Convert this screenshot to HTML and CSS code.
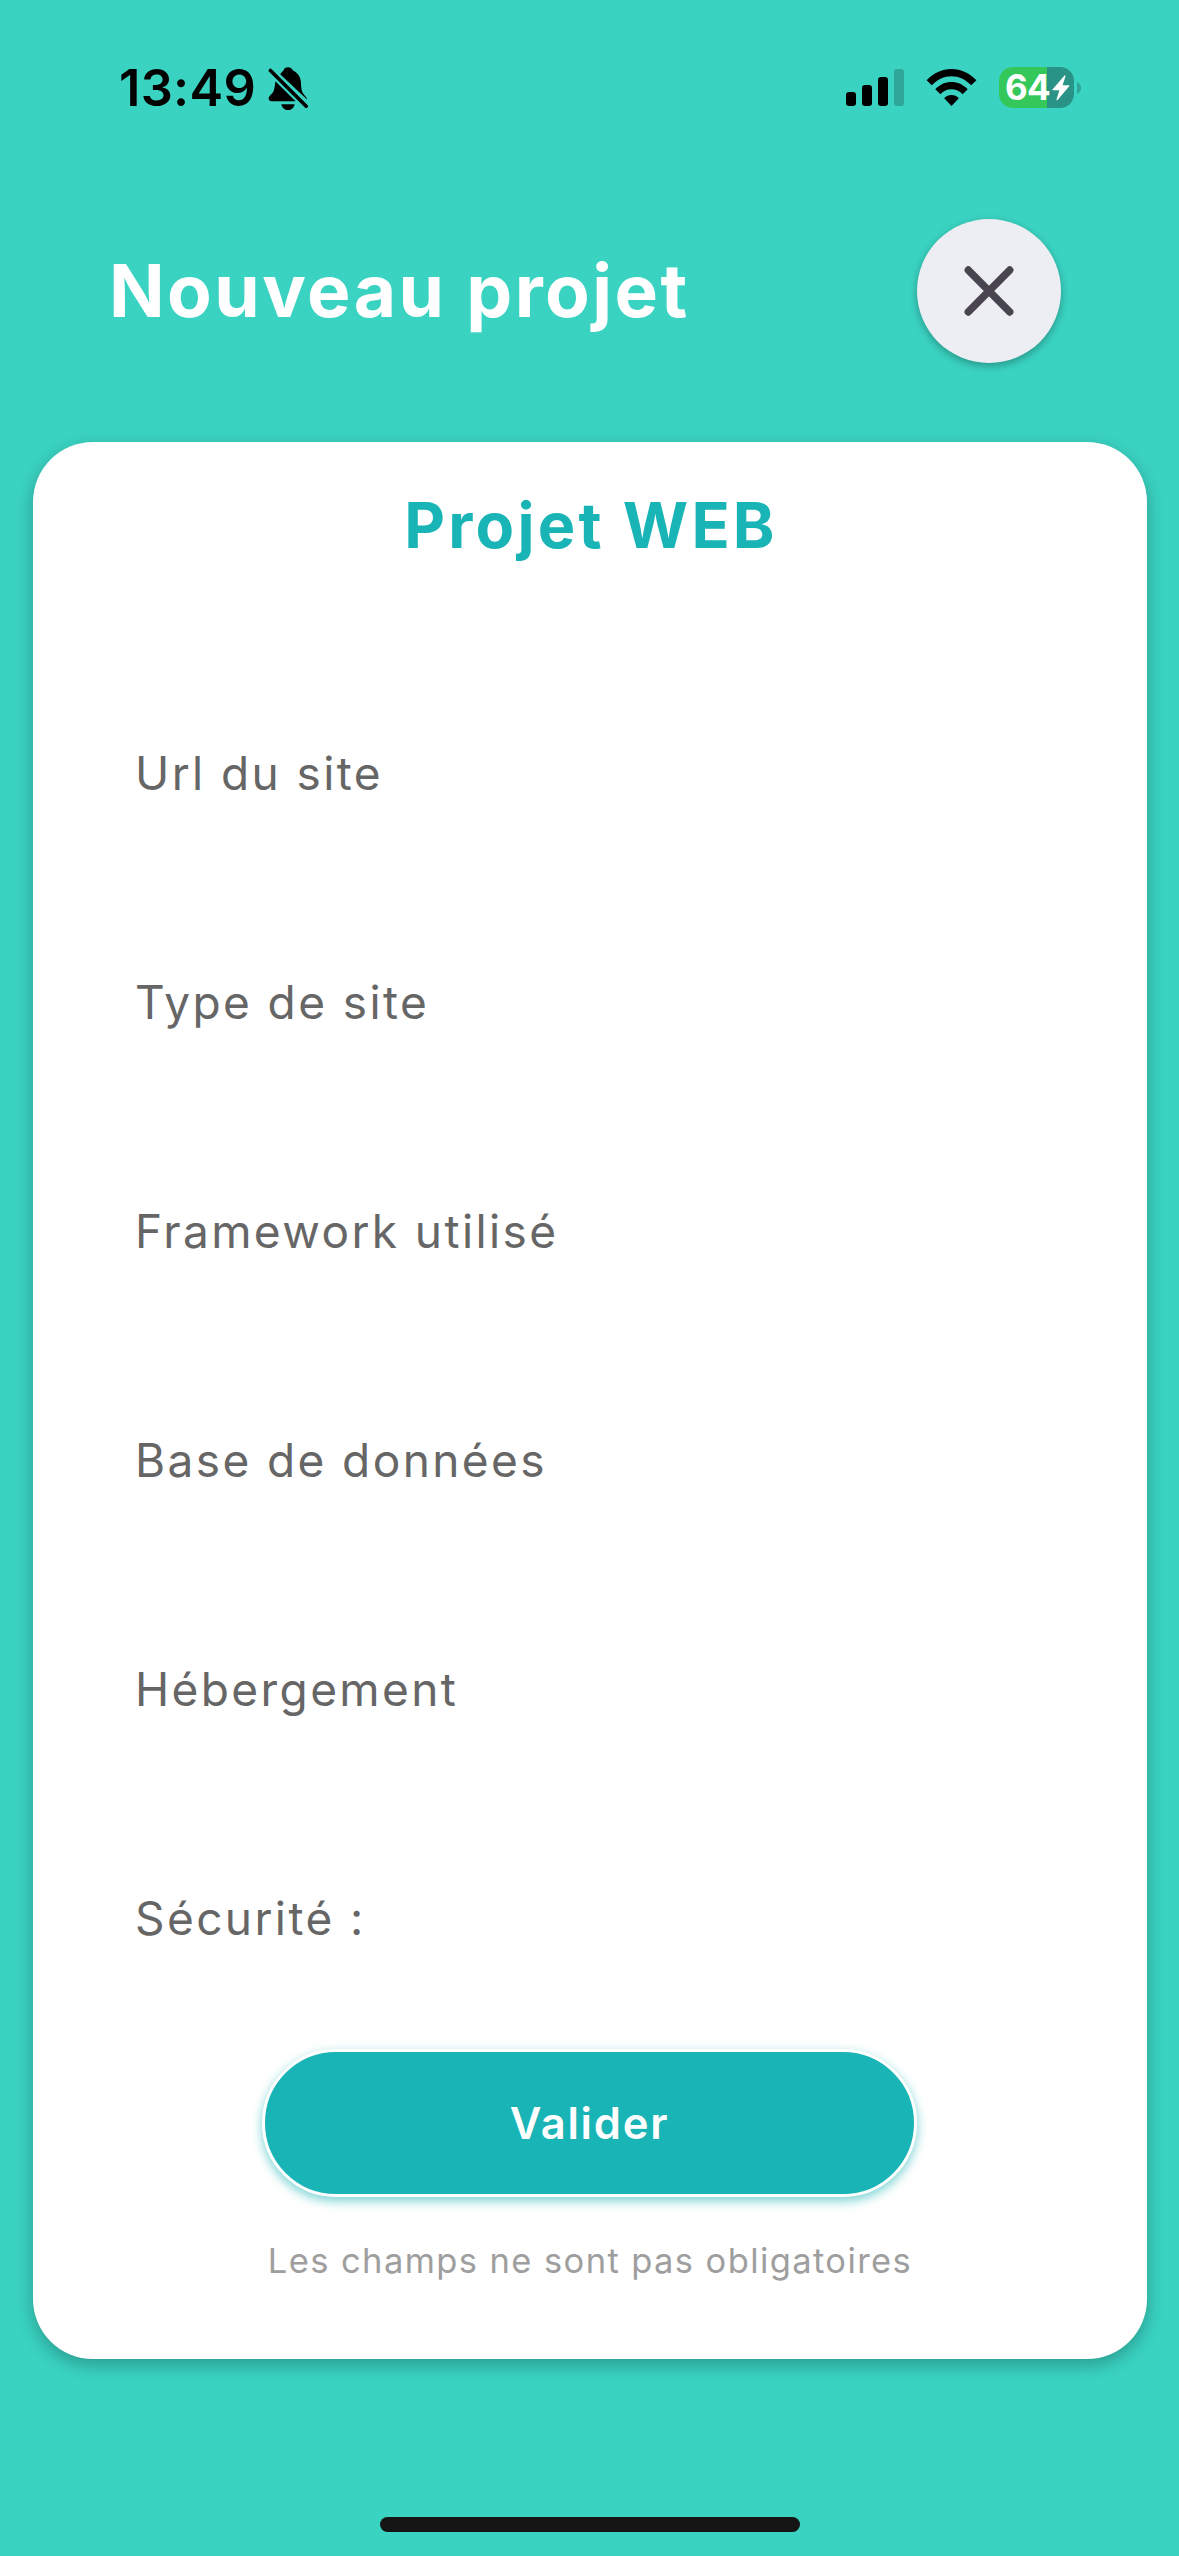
FILE: index.html
```
<!DOCTYPE html>
<html lang="fr">
<head>
  <meta charset="utf-8">
  <title>Nouveau projet</title>
  <link rel="stylesheet" href="styles.css">
</head>
<body>
  <div class="screen">
    <div class="status-bar">
      <div class="status-left">
        <span class="time">13:49</span>
        <svg class="bell" width="42" height="44" viewBox="0 0 42 44">
          <path d="M12.2 7.2C13.8 5 16 3.6 16 2.6C16.5 1 18.2.2 20 .2s3.700.8 4.200 2.400c.3 1 8.800 3.800 8.800 13.600c.2 7 1.200 9.200 3.300 11.800c1.400 1.600 2.700 3 2.700 4.400z"/>
          <path d="M7.400 14.200L27.600 34.200H3.600C1.600 34.200.6 33 .6 31.600c0-2.800 3.200-4 4.900-7.400c1.200-2.600 1.500-6.400 1.900-10z"/>
          <path d="M13.300 37.200h13.400c-.8 3.600-3.400 5.800-6.700 5.800s-5.900-2.200-6.700-5.800z"/>
          <path class="slash" d="M2.400 3.400L38.200 39.200"/>
        </svg>
      </div>
      <div class="status-right">
        <svg class="signal" width="58" height="38" viewBox="0 0 58 38">
          <rect x="0" y="23" width="10" height="14" rx="3"/>
          <rect x="16" y="16" width="10" height="21" rx="3"/>
          <rect x="32" y="8" width="10" height="29" rx="3"/>
          <rect class="dim" x="48" y="0" width="10" height="37" rx="3"/>
        </svg>
        <svg class="wifi" width="51" height="38" viewBox="0 0 51 38">
          <path d="M.6 11.300C7.400 4.200 16 0 25.500 0s18.100 4.200 24.900 11.300L45.200 16.200C39.600 10.600 32.700 7.300 25.500 7.300S11.400 10.600 5.800 16.200z"/>
          <path d="M9.300 20.200c4.400-4.600 10-7.200 16.200-7.200s11.800 2.600 16.200 7.200L36.600 25.200c-3-3.200-6.900-5-11.100-5s-8.100 1.800-11.100 5z"/>
          <path d="M18.200 29.200c2-2 4.500-3.100 7.300-3.100s5.300 1.100 7.300 3.100L25.500 37z"/>
        </svg>
        <div class="battery">
          <div class="battery-body">
            <span class="level">64</span>
            <svg class="bolt" width="18" height="26" viewBox="0 0 18 26">
              <path d="M12.500.6L.7 14.200c-.5.600-.2 1.100.5 1.100H7.400L4.500 24.600c-.2.800.5 1.200 1.100.5L17 11.400c.5-.6.2-1.100-.5-1.100H10.600L13.500 1.200c.2-.8-.5-1.200-1-.6z"/>
            </svg>
          </div>
          <svg width="4" height="12" viewBox="0 0 4 12"><path class="nub" d="M0 0C2.600 1 4 3.300 4 6s-1.400 5-4 6z"/></svg>
        </div>
      </div>
    </div>

    <header class="header">
      <h1 class="title">Nouveau projet</h1>
      <button class="close" aria-label="Fermer">
        <svg width="52" height="52" viewBox="0 0 52 52"><path class="cross" d="M5.300 5.100L46.700 46.900M46.700 5.100L5.300 46.900"/></svg>
      </button>
    </header>

    <main class="card">
      <h2 class="card-title">Projet WEB</h2>
      <div class="fields">
        <div class="field">Url du site</div>
        <div class="field">Type de site</div>
        <div class="field">Framework utilisé</div>
        <div class="field">Base de données</div>
        <div class="field">Hébergement</div>
        <div class="field">Sécurité :</div>
      </div>
      <button class="submit">Valider</button>
      <p class="note">Les champs ne sont pas obligatoires</p>
    </main>

    <div class="home-indicator"></div>
  </div>
</body>
</html>
```
FILE: styles.css
```
* {
  box-sizing: border-box;
}

body {
  margin: 0;
  font-family: Inter, "Liberation Sans", sans-serif;
}

.screen {
  display: flex;
  flex-direction: column;
  width: 1179px;
  height: 2556px;
  background: #3ad3c2;
  overflow: hidden;
}

svg {
  display: block;
}

.status-bar {
  display: flex;
  justify-content: space-between;
  height: 219px;
  padding: 67px 98px 0 119px;
}

.status-left {
  display: flex;
  align-items: flex-start;
  gap: 12px;
}

.time {
  font-size: 50.5px;
  font-weight: 600;
  line-height: 42px;
  letter-spacing: 0.3px;
}

.slash {
  fill: none;
  stroke: #000;
  stroke-width: 3.6;
  stroke-linecap: round;
}

.status-right {
  display: flex;
  align-items: flex-start;
}

.signal {
  margin: 2px 22px 0 0;
}

.dim {
  fill: #2ea798;
}

.wifi {
  margin: 2px 22px 0 0;
}

.battery {
  display: flex;
  align-items: center;
  gap: 3px;
}

.battery-body {
  display: flex;
  align-items: center;
  width: 75px;
  height: 41px;
  padding-left: 6px;
  border-radius: 14px;
  background: linear-gradient(to right, #34c759 48px, #2a9387 48px);
}

.level {
  width: 46px;
  color: #fff;
  font-size: 35px;
  font-weight: 700;
  line-height: 41px;
  letter-spacing: -0.7px;
}

.bolt {
  margin-left: 1px;
  fill: #fff;
}

.nub {
  fill: #2ea798;
}

.header {
  display: flex;
  align-items: center;
  justify-content: space-between;
  height: 144px;
  padding: 0 118.5px 0 109px;
}

.title {
  margin: 0;
  color: #fff;
  font-size: 73px;
  font-weight: 650;
  line-height: 144px;
  letter-spacing: 2.45px;
}

.close {
  display: flex;
  align-items: center;
  justify-content: center;
  width: 144px;
  height: 144px;
  padding: 0;
  border: 0;
  border-radius: 50%;
  background: #edeef3;
  box-shadow: 0 3px 9px rgba(0, 0, 0, 0.3);
}

.cross {
  fill: none;
  stroke: #49454f;
  stroke-width: 7.5;
  stroke-linecap: round;
}

.card {
  display: flex;
  flex-direction: column;
  align-items: center;
  height: 1917px;
  margin: 79px 32.5px 0;
  border-radius: 60px;
  background: #fff;
  box-shadow: 0 6px 18px rgba(0, 0, 0, 0.27);
}

.card-title {
  margin: 43px 0 94px;
  padding-left: 3px;
  color: #19b4b5;
  font-size: 63px;
  font-weight: 650;
  line-height: 80px;
  letter-spacing: 3.2px;
}

.fields {
  align-self: stretch;
  padding-left: 102.5px;
}

.field {
  height: 229px;
  color: #666;
  font-size: 46px;
  line-height: 229px;
  letter-spacing: 2.4px;
}

.submit {
  width: 655px;
  height: 148px;
  margin-top: 16px;
  padding: 0;
  border: 3px solid #fff;
  border-radius: 74px;
  background: #19b4b5;
  box-shadow: 0 4px 10px 1px rgba(25, 180, 181, 0.5);
  color: #fff;
  font-family: inherit;
  font-size: 43.5px;
  font-weight: 600;
  letter-spacing: 1.8px;
}

.note {
  margin: 34px 0 0;
  padding-left: 1px;
  color: #9e9e9e;
  font-size: 34.5px;
  line-height: 60px;
  letter-spacing: 1.4px;
}

.home-indicator {
  width: 420px;
  height: 15px;
  margin: 158px auto 0;
  border-radius: 8px;
  background: #151515;
}
```
